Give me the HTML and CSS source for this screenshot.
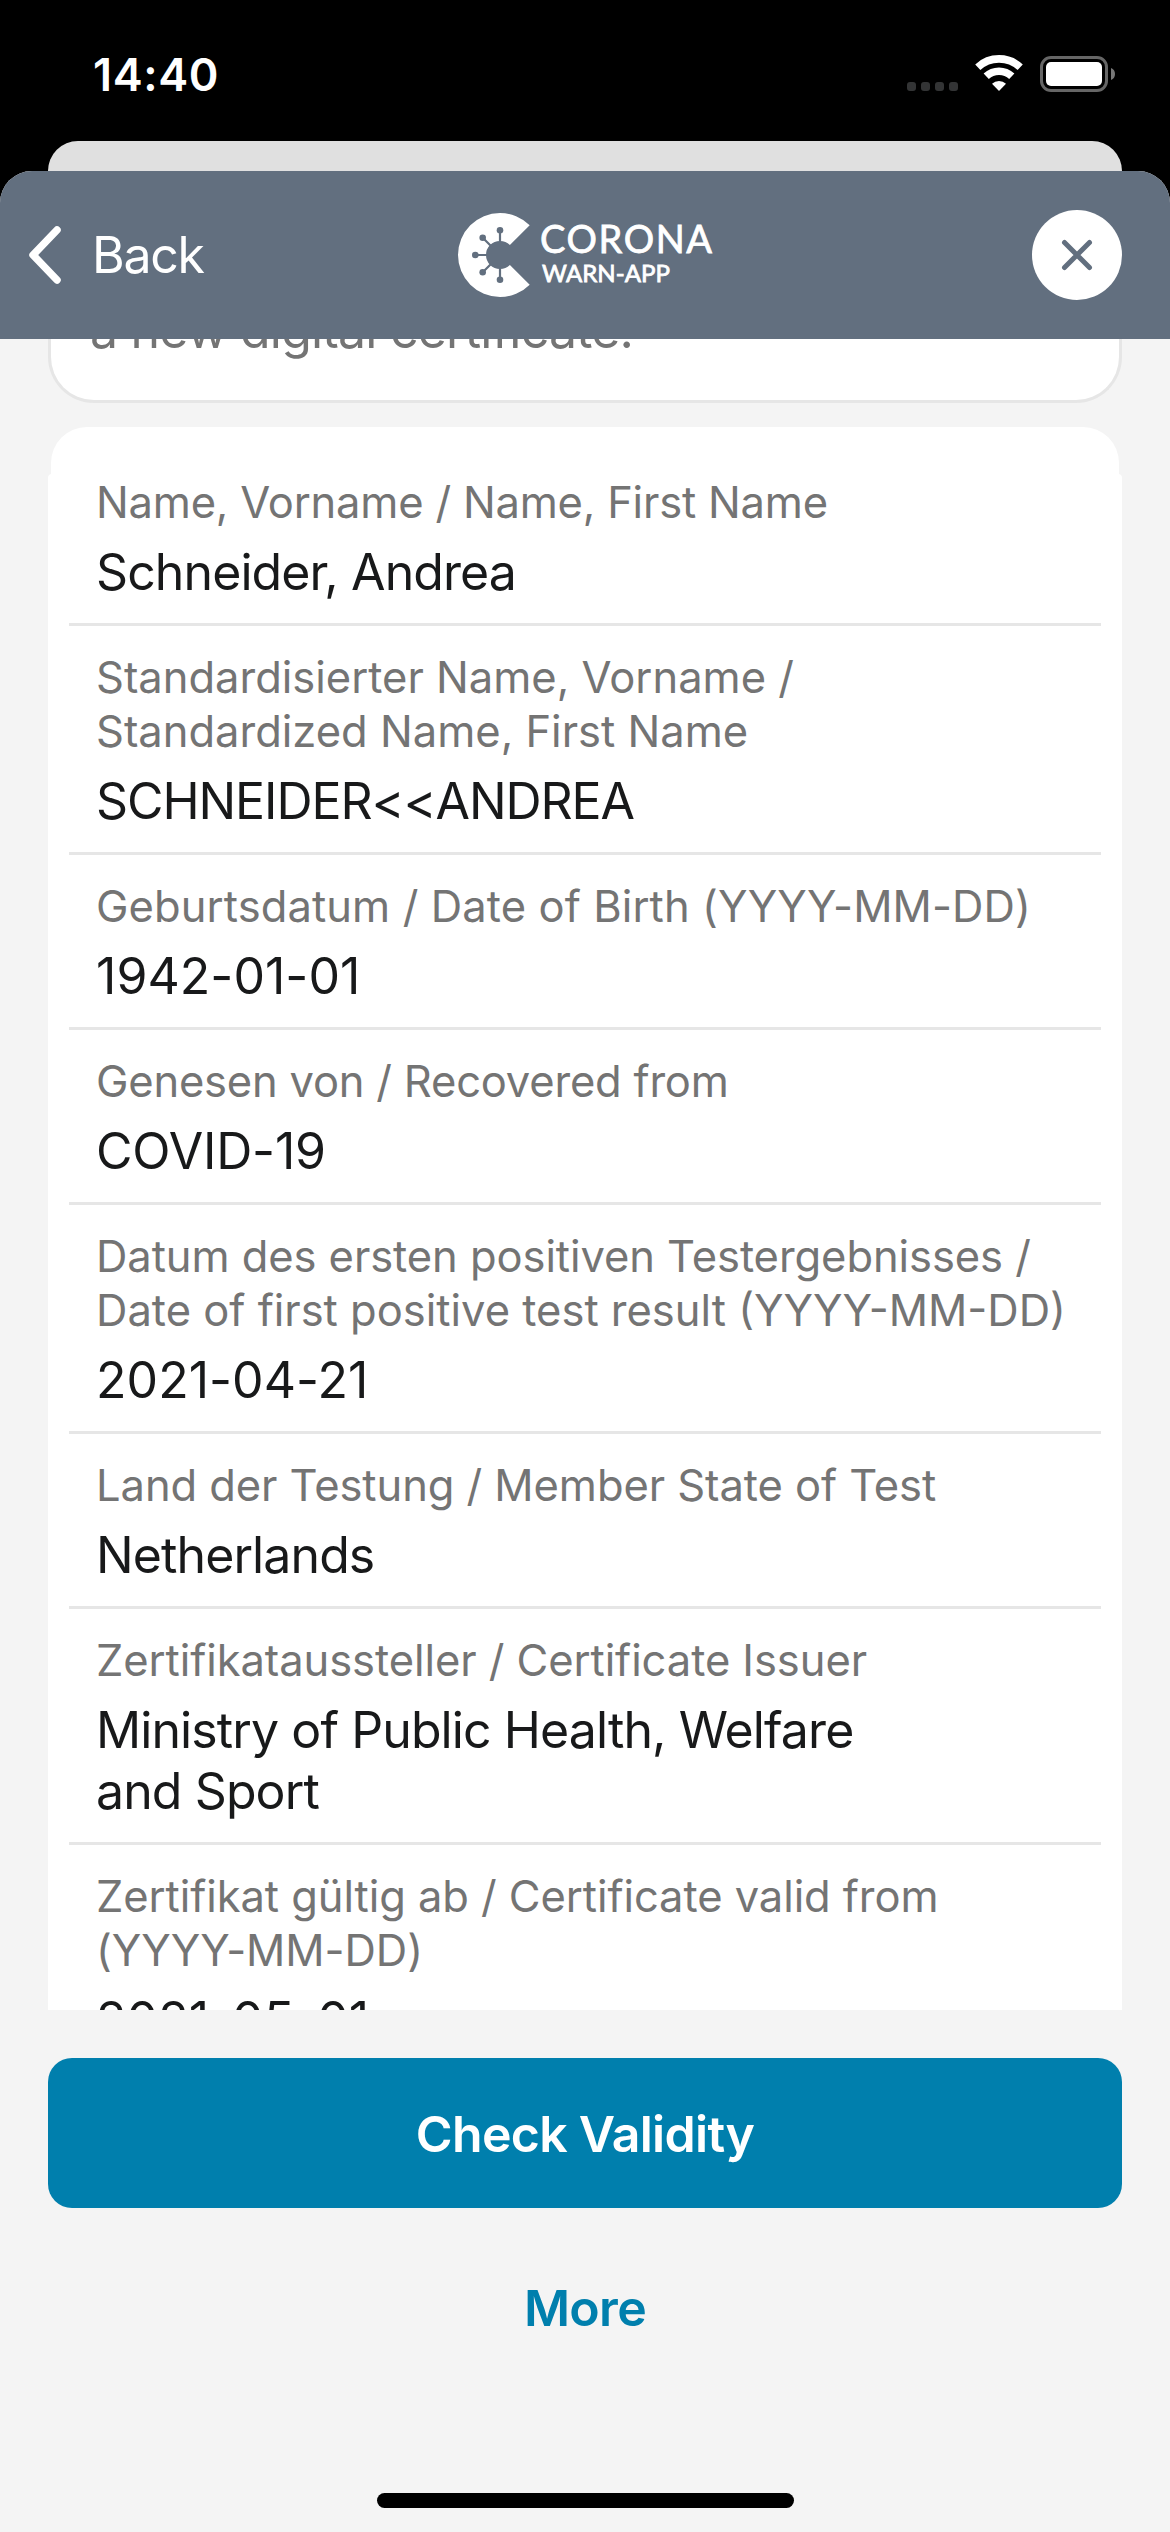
FILE: index.html
```html
<!DOCTYPE html>
<html lang="en">
<head>
<meta charset="utf-8">
<title>Corona-Warn-App</title>
<link rel="stylesheet" href="styles.css">
</head>
<body>
<div class="screen">
  <div class="status-bar">
    <span class="time">14:40</span>
    <div class="status-icons">
      <svg class="signal" width="51" height="9" viewBox="0 0 51 9">
        <rect width="9" height="9" rx="3"/><rect x="14" width="9" height="9" rx="3"/><rect x="28" width="9" height="9" rx="3"/><rect x="42" width="9" height="9" rx="3"/>
      </svg>
      <svg class="wifi" width="48" height="37" viewBox="-24 -35 48 37">
        <path class="arc" d="M-21.2-22.8A31.2 31.2 0 0 1 21.2-22.8M-12.8-13.7A18.7 18.7 0 0 1 12.8-13.7"/>
        <path class="dot" d="M0 1L-7-6.2A10 10 0 0 1 7-6.2Z"/>
      </svg>
      <svg class="battery" width="75" height="36" viewBox="0 0 75 36">
        <rect class="case" x="1.5" y="1.5" width="65" height="33" rx="9.5"/>
        <rect class="charge" x="6" y="6" width="56" height="24" rx="5"/>
        <path class="nub" d="M71 12A6.5 6.5 0 0 1 71 24Z"/>
      </svg>
    </div>
  </div>
  <div class="sheet-behind"></div>
  <div class="sheet">
    <header class="header">
      <a class="back">
        <svg width="36" height="60" viewBox="0 0 36 60"><path d="M30 5L6 30L30 55"/></svg>
        <span>Back</span>
      </a>
      <svg class="logo" width="256" height="84" viewBox="0 0 256 84">
        <path class="logo-fill" d="M71.7 12.3A42 42 0 1 0 71.7 71.7L51.9 51.9A14 14 0 1 1 51.9 32.1Z"/>
        <g class="logo-spikes">
          <path d="M42 17V30M24.7 24.7L33 33M17 42H30M24.7 59.3L33 51M42 67V54"/>
          <circle cx="42" cy="17.3" r="3.3"/><circle cx="24.7" cy="24.7" r="3.3"/><circle cx="17.3" cy="42" r="3.3"/><circle cx="24.7" cy="59.3" r="3.3"/><circle cx="42" cy="66.7" r="3.3"/>
        </g>
        <text class="logo-title" x="82" y="40" textLength="172">CORONA</text>
        <text class="logo-sub" x="84" y="69" textLength="128">WARN-APP</text>
      </svg>
      <span class="close">
        <svg width="36" height="36" viewBox="0 0 36 36"><path d="M5.5 5.5L30.5 30.5M30.5 5.5L5.5 30.5"/></svg>
      </span>
    </header>
    <main class="content">
      <section class="notice">a new digital certificate.</section>
      <section class="certificate">
        <div class="card-cap"></div>
        <dl class="fields">
          <div class="field">
            <dt class="snug">Name, Vorname / Name, First Name</dt>
            <dd>Schneider, Andrea</dd>
          </div>
          <div class="field">
            <dt class="wide">Standardisierter Name, Vorname /<br>Standardized Name, First Name</dt>
            <dd class="caps">SCHNEIDER&lt;&lt;ANDREA</dd>
          </div>
          <div class="field">
            <dt class="code">Geburtsdatum / Date of Birth (YYYY-MM-DD)</dt>
            <dd class="digits">1942-01-01</dd>
          </div>
          <div class="field">
            <dt class="snug">Genesen von / Recovered from</dt>
            <dd class="code">COVID-19</dd>
          </div>
          <div class="field">
            <dt>Datum des ersten positiven Testergebnisses /<br><span class="wide">Date of first positive test result (YYYY-MM-DD)</span></dt>
            <dd class="digits">2021-04-21</dd>
          </div>
          <div class="field">
            <dt>Land der Testung / Member State of Test</dt>
            <dd>Netherlands</dd>
          </div>
          <div class="field">
            <dt>Zertifikataussteller / Certificate Issuer</dt>
            <dd>Ministry of Public Health, Welfare<br>and Sport</dd>
          </div>
          <div class="field">
            <dt>Zertifikat gültig ab / Certificate valid from<br>(YYYY-MM-DD)</dt>
            <dd class="digits">2021-05-01</dd>
          </div>
        </dl>
      </section>
    </main>
    <footer class="actions">
      <div class="button primary">Check Validity</div>
      <div class="button link">More</div>
      <div class="home-indicator"></div>
    </footer>
  </div>
</div>
</body>
</html>
```
FILE: styles.css
```css
* { box-sizing: border-box; }
body { margin: 0; background: #000; font-family: Inter, "Liberation Sans", sans-serif; }
svg { display: block; flex: none; }

.screen {
  width: 1170px;
  height: 2532px;
  display: flex;
  flex-direction: column;
  overflow: hidden;
  background: #000;
}

/* Status bar */
.status-bar {
  height: 141px;
  flex: none;
  display: flex;
  justify-content: space-between;
  align-items: flex-start;
  padding: 55px 55px 0 93px;
}
.time { color: #fff; font-size: 45px; font-weight: 600; line-height: 40px; letter-spacing: 0.6px; }
.status-icons { display: flex; align-items: flex-start; }
.signal { fill: #333435; margin-top: 27px; }
.wifi { margin-left: 17px; }
.wifi .arc { fill: none; stroke: #fff; stroke-width: 7.6; }
.wifi .dot { fill: #fff; }
.battery { margin: 1px 0 0 17px; }
.battery .case { fill: none; stroke: #666; stroke-width: 3; }
.battery .charge { fill: #fff; }
.battery .nub { fill: #777; }

/* Stacked sheets */
.sheet-behind { height: 30px; flex: none; margin: 0 48px; border-radius: 30px 30px 0 0; background: #e0e0e0; }
.sheet {
  flex: 1;
  min-height: 0;
  display: flex;
  flex-direction: column;
  border-radius: 32px 32px 0 0;
  overflow: hidden;
  background: #f4f4f4;
}

/* Header */
.header {
  height: 168px;
  flex: none;
  display: grid;
  grid-template-columns: 1fr 256px 1fr;
  align-items: center;
  padding: 0 48px 0 27px;
  background: #626f7f;
}
.back { display: flex; align-items: center; gap: 29px; color: #fff; font-size: 50px; line-height: 60px; letter-spacing: -1.25px; }
.back path { fill: none; stroke: #fff; stroke-width: 7.5; stroke-linecap: round; stroke-linejoin: round; }
.logo { margin-left: 11px; overflow: visible; }
.logo-fill { fill: #fff; }
.logo-spikes { fill: #626f7f; }
.logo-spikes path { stroke: #626f7f; stroke-width: 2.2; }
.logo text { font-family: Lato, sans-serif; font-weight: 400; fill: #fff; stroke: #fff; stroke-width: 0.8; }
.logo .logo-title { font-size: 38px; }
.logo .logo-sub { font-size: 24px; }
.close { justify-self: end; width: 90px; height: 90px; border-radius: 50%; background: #fff; display: flex; align-items: center; justify-content: center; }
.close path { stroke: #626f7f; stroke-width: 5; stroke-linecap: round; }

/* Scrolled content */
.content { height: 1671px; flex: none; overflow: hidden; padding: 0 48px; }
.notice {
  height: 64px;
  margin-bottom: 24px;
  border: 3px solid #e6e6e6;
  border-top: 0;
  border-radius: 0 0 46px 46px;
  background: #fff;
  padding: 0 39px 40px;
  color: #747474;
  font-size: 50px;
  line-height: 60px;
  letter-spacing: -0.81px;
  display: flex;
  align-items: flex-end;
}
.card-cap { height: 47px; margin: 0 3px; border-radius: 36px 36px 0 0; background: #fff; }
.fields { margin: 0; padding: 0 21px; border-radius: 4px 4px 0 0; background: #fff; }
.field { padding: 24px 0 20px 27px; border-bottom: 3px solid #e6e6e6; white-space: nowrap; }
.field:first-child { padding-top: 1px; }
dt { color: #747474; font-size: 43.5px; line-height: 54px; letter-spacing: -0.07px; }
dd { margin: 13px 0 0; color: #18191a; font-size: 50px; line-height: 61px; letter-spacing: -0.9px; }
.snug { letter-spacing: -0.2px; }
.wide { letter-spacing: 0; }
dt.code { letter-spacing: 0.1px; }
dd.code { letter-spacing: -0.2px; }
dd.caps { letter-spacing: -1.08px; }
dd.digits { letter-spacing: 0.05px; }

/* Bottom actions */
.actions { flex: 1; display: flex; flex-direction: column; align-items: stretch; padding: 49px 48px 24px; margin-top: -1px; }
.actions { margin-top: 0; padding-top: 48px; }
.button { height: 150px; display: flex; align-items: center; justify-content: center; padding-top: 1px; font-size: 50px; font-weight: 600; letter-spacing: -0.7px; }
.primary { border-radius: 24px; background: #007fad; color: #fff; }
.link { margin-top: 24px; color: #007fad; }
.home-indicator { width: 417px; height: 15px; border-radius: 8px; margin: auto auto 0; background: #000; }
```
